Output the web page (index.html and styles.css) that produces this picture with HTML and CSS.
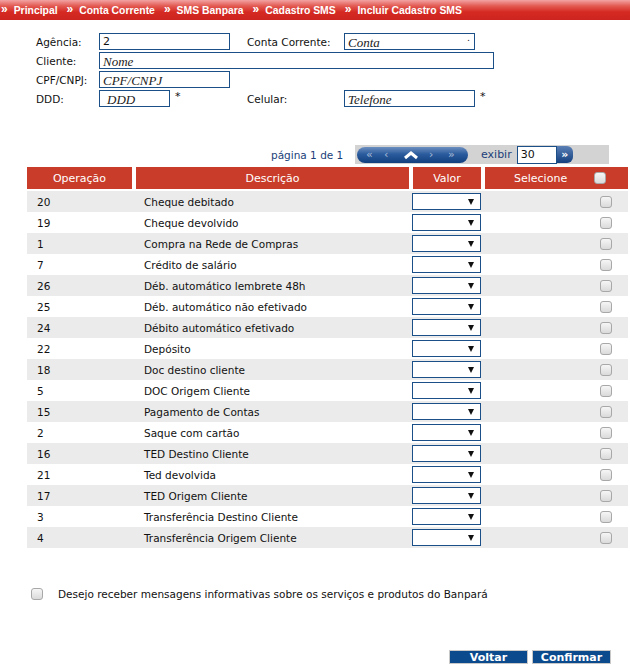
FILE: index.html
```html
<!DOCTYPE html>
<html lang="pt-BR">
<head>
<meta charset="utf-8">
<title>Incluir Cadastro SMS</title>
<link rel="stylesheet" href="styles.css">
</head>
<body>
<div class="crumbs">
  <span class="crumb"><span class="ch">»</span>Principal</span>
  <span class="crumb"><span class="ch">»</span>Conta Corrente</span>
  <span class="crumb"><span class="ch">»</span>SMS Banpara</span>
  <span class="crumb"><span class="ch">»</span>Cadastro SMS</span>
  <span class="crumb"><span class="ch">»</span>Incluir Cadastro SMS</span>
</div>

<div class="form">
  <label class="lbl">Agência:</label>
  <div class="field"><span class="inp w131 val">2</span></div>
  <label class="lbl">Conta Corrente:</label>
  <div class="field"><span class="inp w131 ph">Conta<span class="dot">.</span></span></div>

  <label class="lbl">Cliente:</label>
  <div class="field span3"><span class="inp w395 ph">Nome</span></div>

  <label class="lbl">CPF/CNPJ:</label>
  <div class="field span3"><span class="inp w131 ph">CPF/CNPJ</span></div>

  <label class="lbl">DDD:</label>
  <div class="field"><span class="inp w71 ph ind">DDD</span><span class="req">*</span></div>
  <label class="lbl">Celular:</label>
  <div class="field"><span class="inp w131 ph">Telefone</span><span class="req">*</span></div>
</div>

<div class="pager-row">
  <span class="pg-text">página 1 de 1</span>
  <div class="pager">
    <div class="pill">
      <span class="pb">«</span><span class="pb">‹</span>
      <svg class="caret" width="16" height="10" viewBox="0 0 16 10"><path d="M2 8 L8 3 L14 8" fill="none" stroke="#fff" stroke-width="3" stroke-linejoin="miter"/></svg>
      <span class="pb">›</span><span class="pb">»</span>
    </div>
    <span class="exibir">exibir</span>
    <span class="qty">30</span><span class="go">»</span>
  </div>
</div>

<div class="tbl">
  <div class="thead">
    <div class="th">Operação</div>
    <div class="th">Descrição</div>
    <div class="th">Valor</div>
    <div class="th sel">Selecione<span class="cb hcb"></span></div>
  </div>
  <div class="tr"><div class="c1">20</div><div class="c2">Cheque debitado</div><div class="c3"><span class="select"></span></div><div class="c4"><span class="cb"></span></div></div>
  <div class="tr"><div class="c1">19</div><div class="c2">Cheque devolvido</div><div class="c3"><span class="select"></span></div><div class="c4"><span class="cb"></span></div></div>
  <div class="tr"><div class="c1">1</div><div class="c2">Compra na Rede de Compras</div><div class="c3"><span class="select"></span></div><div class="c4"><span class="cb"></span></div></div>
  <div class="tr"><div class="c1">7</div><div class="c2">Crédito de salário</div><div class="c3"><span class="select"></span></div><div class="c4"><span class="cb"></span></div></div>
  <div class="tr"><div class="c1">26</div><div class="c2">Déb. automático lembrete 48h</div><div class="c3"><span class="select"></span></div><div class="c4"><span class="cb"></span></div></div>
  <div class="tr"><div class="c1">25</div><div class="c2">Déb. automático não efetivado</div><div class="c3"><span class="select"></span></div><div class="c4"><span class="cb"></span></div></div>
  <div class="tr"><div class="c1">24</div><div class="c2">Débito automático efetivado</div><div class="c3"><span class="select"></span></div><div class="c4"><span class="cb"></span></div></div>
  <div class="tr"><div class="c1">22</div><div class="c2">Depósito</div><div class="c3"><span class="select"></span></div><div class="c4"><span class="cb"></span></div></div>
  <div class="tr"><div class="c1">18</div><div class="c2">Doc destino cliente</div><div class="c3"><span class="select"></span></div><div class="c4"><span class="cb"></span></div></div>
  <div class="tr"><div class="c1">5</div><div class="c2">DOC Origem Cliente</div><div class="c3"><span class="select"></span></div><div class="c4"><span class="cb"></span></div></div>
  <div class="tr"><div class="c1">15</div><div class="c2">Pagamento de Contas</div><div class="c3"><span class="select"></span></div><div class="c4"><span class="cb"></span></div></div>
  <div class="tr"><div class="c1">2</div><div class="c2">Saque com cartão</div><div class="c3"><span class="select"></span></div><div class="c4"><span class="cb"></span></div></div>
  <div class="tr"><div class="c1">16</div><div class="c2">TED Destino Cliente</div><div class="c3"><span class="select"></span></div><div class="c4"><span class="cb"></span></div></div>
  <div class="tr"><div class="c1">21</div><div class="c2">Ted devolvida</div><div class="c3"><span class="select"></span></div><div class="c4"><span class="cb"></span></div></div>
  <div class="tr"><div class="c1">17</div><div class="c2">TED Origem Cliente</div><div class="c3"><span class="select"></span></div><div class="c4"><span class="cb"></span></div></div>
  <div class="tr"><div class="c1">3</div><div class="c2">Transferência Destino Cliente</div><div class="c3"><span class="select"></span></div><div class="c4"><span class="cb"></span></div></div>
  <div class="tr"><div class="c1">4</div><div class="c2">Transferência Origem Cliente</div><div class="c3"><span class="select"></span></div><div class="c4"><span class="cb"></span></div></div>
</div>

<div class="optin">
  <span class="cb"></span>
  <span>Desejo receber mensagens informativas sobre os serviços e produtos do Banpará</span>
</div>

<div class="actions">
  <span class="btn">Voltar</span>
  <span class="btn">Confirmar</span>
</div>
</body>
</html>
```

FILE: styles.css
```css
* { box-sizing: border-box; }
body {
  margin: 0;
  width: 630px;
  height: 669px;
  overflow: hidden;
  background: #fff;
  font-family: "DejaVu Sans", Verdana, sans-serif;
  font-size: 10.5px;
  color: #111;
}

/* breadcrumb bar */
.crumbs {
  height: 20px;
  display: flex;
  align-items: center;
  gap: 9px;
  padding-left: 1px;
  background: linear-gradient(#f2a3a3 0%, #e25a52 30%, #d52a22 60%, #cd2420 100%);
  font-family: "Liberation Sans", Arial, sans-serif;
  font-weight: bold;
  font-size: 10.4px;
  color: #fff;
}
.crumb { display: flex; align-items: center; }
.ch { font-size: 12px; margin-right: 6px; position: relative; top: -1px; }

/* form */
.form {
  display: grid;
  grid-template-columns: 63px 148px 97px 150px;
  grid-auto-rows: 19px;
  margin-top: 13px;
  padding-left: 36px;
}
.lbl { display: flex; align-items: center; height: 17px; }
.field { display: flex; align-items: flex-start; }
.span3 { grid-column: 2 / span 3; }
.inp {
  display: flex;
  align-items: center;
  height: 17px;
  border: 1px solid #1b4f88;
  padding-left: 3px;
  background: #fff;
}
.w131 { width: 131px; }
.w395 { width: 395px; }
.w71 { width: 71px; }
.ind { padding-left: 7px; }
.val { font-size: 11px; }
.ph {
  font-family: "Liberation Serif", "Times New Roman", serif;
  font-style: italic;
  font-size: 13px;
  color: #222;
  padding-top: 2px;
  position: relative;
}
.dot { position: absolute; right: 4px; top: -2px; font-size: 10px; }
.req { margin-left: 5px; font-size: 11px; }

/* pager */
.pager-row {
  display: flex;
  align-items: center;
  margin-top: 36px;
  padding-left: 271px;
  height: 19px;
}
.pg-text { color: #1b3f7a; width: 84px; }
.pager {
  display: flex;
  align-items: center;
  width: 254px;
  height: 19px;
  background: #d3d3d3;
  padding-left: 2px;
}
.pill {
  display: flex;
  align-items: center;
  width: 111px;
  height: 16px;
  border-radius: 8px;
  background: linear-gradient(#6d8fc0 0%, #2a5b9c 45%, #13407f 100%);
  padding-left: 9px;
}
.pb { color: #a9bcd8; font-size: 11px; line-height: 1; }
.pb:nth-child(1) { width: 18px; }
.pb:nth-child(2) { width: 19px; }
.caret { margin-right: 10px; }
.pb:nth-child(4) { width: 19px; }
.exibir { color: #1b3f7a; margin-left: 13px; font-size: 11px; }
.qty {
  margin-left: 5px;
  width: 40px;
  height: 18px;
  border: 1px solid #1b4f88;
  background: #fff;
  font-size: 11px;
  padding-left: 3px;
  display: flex;
  align-items: center;
}
.go {
  width: 16px;
  height: 17px;
  background: linear-gradient(#5a7fb5, #13407f);
  border-radius: 0 6px 6px 0;
  color: #fff;
  font-weight: bold;
  font-size: 11px;
  display: flex;
  align-items: center;
  justify-content: center;
}

/* table */
.tbl { margin: 3px 0 0 27px; width: 601px; }
.thead, .tr {
  display: grid;
  grid-template-columns: 105px 273px 68px 143px;
  column-gap: 4px;
}
.thead { height: 22px; margin-bottom: 2px; }
.th {
  background: #c93c2a;
  color: #fff;
  display: flex;
  align-items: center;
  justify-content: center;
  font-size: 11px;
}
.th.sel { justify-content: flex-start; padding-left: 29px; position: relative; }
.hcb { position: absolute; left: 109px; top: 5px; }
.tr { height: 21px; align-items: center; }
.tr:nth-child(even) { background: #ebebeb; }
.c1 { padding-left: 10px; }
.c2 { padding-left: 8px; }
.c3 { margin-left: -1px; display: flex; }
.c4 { display: flex; padding-left: 115px; }
.select {
  width: 70px;
  height: 17px;
  border: 1px solid #1b4f88;
  background: #fff;
  position: relative;
}
.select::after {
  content: "";
  position: absolute;
  right: 6px;
  top: 5px;
  border-left: 3.5px solid transparent;
  border-right: 3.5px solid transparent;
  border-top: 6px solid #111;
}
.cb {
  display: inline-block;
  width: 12px;
  height: 12px;
  border: 1px solid #a8a8a8;
  border-radius: 3px;
  background: linear-gradient(#f6f6f6, #dadada);
}

/* opt-in */
.optin {
  display: flex;
  align-items: center;
  gap: 15px;
  margin-top: 40px;
  padding-left: 31px;
}

/* buttons */
.actions {
  display: flex;
  gap: 4px;
  margin-top: 50px;
  padding-left: 449px;
}
.btn {
  width: 79px;
  height: 14px;
  background: #0c4a8e;
  border: 1px solid #c8c8c8;
  color: #fff;
  font-weight: bold;
  font-size: 11px;
  display: flex;
  align-items: center;
  justify-content: center;
}
```
